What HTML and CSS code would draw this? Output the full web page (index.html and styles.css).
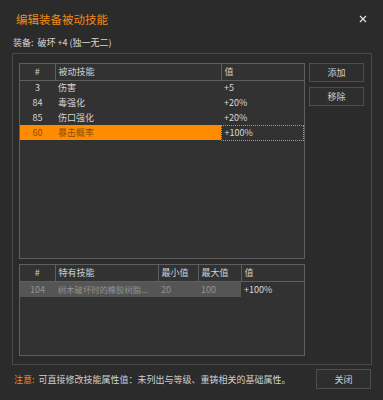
FILE: index.html
```html
<!DOCTYPE html>
<html lang="zh-CN">
  <head>
    <meta charset="UTF-8" />
    <title>编辑装备被动技能</title>
    <link rel="stylesheet" href="styles.css">
  </head>
  <body>
    <div class="dialog">
      <div class="titlebar">
        <span class="title">编辑装备被动技能</span>
        <button class="close-x" aria-label="关闭">
          <svg width="8" height="8" viewBox="0 0 8 8">
            <path d="M1 1 L7 7 M7 1 L1 7" stroke="#e0e0e0" stroke-width="1.3" fill="none" />
          </svg>
        </button>
      </div>

      <div class="equip">装备:&nbsp; 破坏 +4 (独一无二)</div>

      <div class="group">
        <div class="lists">
          <div class="list list-main">
            <table class="grid">
              <colgroup>
                <col style="width: 35px" />
                <col style="width: 166px" />
                <col />
              </colgroup>
              <thead>
                <tr>
                  <th class="num">#</th>
                  <th>被动技能</th>
                  <th>值</th>
                </tr>
              </thead>
              <tbody>
                <tr>
                  <td class="num">3</td>
                  <td>伤害</td>
                  <td>+5</td>
                </tr>
                <tr>
                  <td class="num">84</td>
                  <td>毒强化</td>
                  <td>+20%</td>
                </tr>
                <tr>
                  <td class="num">85</td>
                  <td>伤口强化</td>
                  <td>+20%</td>
                </tr>
                <tr class="selected">
                  <td class="num">60</td>
                  <td>暴击概率</td>
                  <td class="focus">+100%</td>
                </tr>
              </tbody>
            </table>
          </div>

          <div class="list list-unique">
            <table class="grid">
              <colgroup>
                <col style="width: 35px" />
                <col style="width: 103px" />
                <col style="width: 40px" />
                <col style="width: 43px" />
                <col />
              </colgroup>
              <thead>
                <tr>
                  <th class="num">#</th>
                  <th>特有技能</th>
                  <th>最小值</th>
                  <th>最大值</th>
                  <th>值</th>
                </tr>
              </thead>
              <tbody>
                <tr class="locked">
                  <td class="num">104</td>
                  <td class="clip">树木破坏时的橡胶树脂...</td>
                  <td>20</td>
                  <td>100</td>
                  <td class="open">+100%</td>
                </tr>
              </tbody>
            </table>
          </div>
        </div>

        <div class="side">
          <button class="btn">添加</button>
          <button class="btn">移除</button>
        </div>
      </div>

      <div class="footer">
        <p class="note"><span class="warn">注意:</span>&nbsp; 可直接修改技能属性值：未列出与等级、重铸相关的基础属性。</p>
        <button class="btn btn-close">关闭</button>
      </div>
    </div>
  </body>
</html>
```

FILE: styles.css
```css
* {
  box-sizing: border-box;
}

body {
  margin: 0;
  background-color: #2b2b2b;
  color: #d2d2d2;
  font-family: "Noto Sans CJK SC", "Noto Sans", sans-serif;
  font-size: 9px;
}

.dialog {
  width: 383px;
  height: 400px;
}

.titlebar {
  height: 37px;
  display: flex;
  align-items: center;
  justify-content: space-between;
  padding: 0 16px 0 16px;
}

.title {
  color: #f08a16;
  font-size: 11.5px;
}

.close-x {
  background: none;
  border: none;
  padding: 0;
  display: flex;
}

.equip {
  line-height: 12px;
  padding-left: 13px;
  margin-bottom: 4px;
  color: #d8d8d8;
}

.group {
  margin: 0 11px 0 12px;
  height: 312px;
  border: 1px solid #4a4a4a;
  padding: 9px 7px 8px 6px;
  display: flex;
  gap: 4px;
}

.lists {
  width: 286px;
  display: flex;
  flex-direction: column;
  gap: 5px;
}

.list {
  border: 1px solid #5e5e5e;
  background-color: #323232;
  overflow: hidden;
}

.list-main {
  height: 196px;
}

.list-unique {
  height: 92px;
}

.grid {
  width: 100%;
  table-layout: fixed;
  border-collapse: collapse;
}

.grid th {
  height: 16px;
  padding: 0 3px;
  font-weight: normal;
  text-align: left;
  color: #d0d0d0;
  border-bottom: 1px solid #5e5e5e;
  border-left: 1px solid #5e5e5e;
}

.grid th:first-child {
  border-left: none;
}

.grid td {
  height: 15px;
  padding: 0 3px;
  white-space: nowrap;
  color: #d6d6d6;
}

.grid .num {
  text-align: center;
}

.selected td {
  background-color: #ff8c00;
  color: #8a4d05;
}

.selected td.focus {
  background-color: transparent;
  color: #d6d6d6;
  border: 1px dotted #9a9a9a;
}

.locked td {
  height: 16px;
  background-color: #555555;
  color: #929292;
}

.locked td.open {
  background-color: transparent;
  color: #d6d6d6;
}

.grid td.clip {
  padding-right: 0;
  font-size: 8.3px;
  overflow: hidden;
}

.side {
  display: flex;
  flex-direction: column;
  gap: 5px;
}

.btn {
  width: 55px;
  height: 19px;
  padding: 0;
  border: 1px solid #4e4e4e;
  background-color: #2e2e2e;
  color: #d0d0d0;
  font-family: inherit;
  font-size: 9px;
}

.footer {
  display: flex;
  align-items: center;
  justify-content: space-between;
  padding: 4px 12px 0 14px;
}

.note {
  margin: 0;
  color: #d0d0d0;
}

.warn {
  color: #f08a16;
}

.btn-close {
  height: 20px;
}
```
